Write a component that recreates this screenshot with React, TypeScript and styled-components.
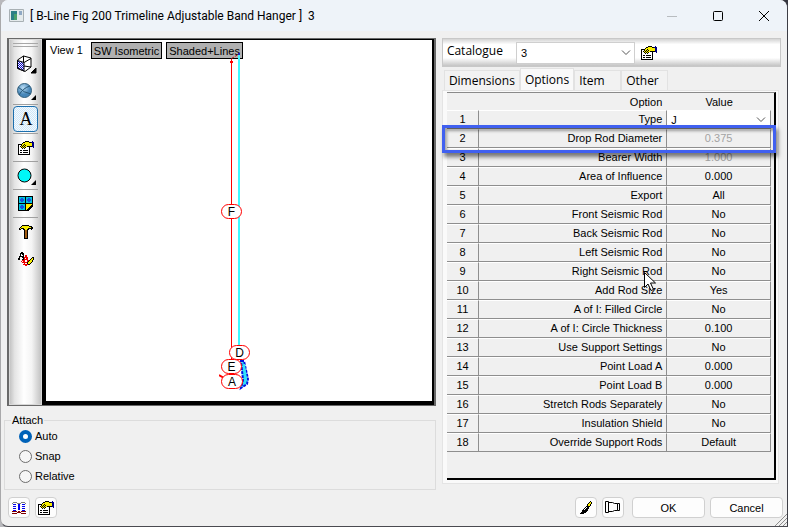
import React, { useState } from "react";
import styled, { createGlobalStyle, css } from "styled-components";

const UI = `"Liberation Sans", Arial, sans-serif`;
const SEGOE = `"Open Sans", "Noto Sans", sans-serif`;

const GlobalStyle = createGlobalStyle`
  *, *::before, *::after { box-sizing: border-box; }
  body {
    margin: 0;
    background: linear-gradient(90deg, #b9b9bd 0, #b9b9bd 60%, #34353f 80%);
    font: 11px/14px ${UI};
    color: #000;
  }
  button, input, select { font: inherit; color: inherit; margin: 0; }
`;

const Dialog = styled.main`
  position: relative;
  display: flex;
  flex-direction: column;
  min-height: 100vh;
  background: #f0f0f0;
  border: 1px solid #a9a9ab;
  border-right-color: #3c3d45;
  border-bottom-color: #4a4a50;
  border-top: 0;
  border-radius: 8px 8px 0 8px;
  overflow: hidden;
`;

const TitleBar = styled.header`
  display: flex;
  align-items: center;
  height: 31px;
  padding: 0 0 0 8px;
  background: #eef3f9;
`;

const Title = styled.h1`
  flex: 1;
  margin: 0 0 0 6px;
  font: 400 12px/16px Roboto, "Noto Sans", sans-serif;
  white-space: pre;
`;

const CaptionButton = styled.button`
  display: grid;
  place-items: center;
  width: 46px;
  height: 31px;
  padding: 0;
  border: 0;
  background: transparent;
`;

const Body = styled.div`
  flex: 1;
  display: grid;
  grid-template-columns: minmax(0, 433fr) minmax(0, 340fr);
  column-gap: 6px;
  padding: 7px 6px 0 3px;
`;

const LeftColumn = styled.div`
  display: flex;
  flex-direction: column;
`;

const RightColumn = styled.div`
  display: flex;
  flex-direction: column;
  padding-bottom: 6px;
`;

const Viewer = styled.section`
  flex: 1;
  display: flex;
  margin-left: 3px;
  border: 2px solid #696969;
  border-width: 1px 2px;
  background: #000;
`;

const Toolbar = styled.div`
  width: 33px;
  padding: 3px 3px 0;
  background: linear-gradient(90deg, #c4c4c4 0, #e4e4e4 15%, #fff 45%, #f4f4f4 70%, #c2c2c2 100%);
  border: 1px solid #d8d8d8;
`;

const Gripper = styled.div`
  height: 4px;
  margin-bottom: 3px;
  border: 1px solid #a8a8a8;
  border-width: 1px 0;
`;

const ToolGroup = styled.div`
  display: flex;
  flex-direction: column;
  & + & { border-top: 1px solid #a0a0a0; }
`;

const ToolButton = styled.button<{ $active?: boolean }>`
  display: grid;
  place-items: center;
  height: 27px;
  padding: 0;
  border: 1px solid transparent;
  border-radius: 4px;
  background: transparent;
  ${(p) =>
    p.$active &&
    css`
      height: 26px;
      margin: 1px 0;
      border-color: #1c6fae;
      background: repeating-conic-gradient(#cfe6f7 0 25%, #f4faff 0 50%) 0 0 / 2px 2px;
    `}
`;

const Stage = styled.div`
  flex: 1;
  display: grid;
  grid-template-rows: 1fr;
  margin: 1px 2px 4px 4px;
  background: #fff;
  overflow: hidden;
`;

const StageHeader = styled.div`
  grid-area: 1 / 1;
  display: flex;
  align-items: flex-start;
  gap: 4px;
  padding: 2px 4px;
`;

const ViewName = styled.span`
  margin-right: 4px;
  line-height: 17px;
`;

const ViewButton = styled.button`
  height: 17px;
  padding: 0 2px;
  border: 1px solid #000;
  background: #b0b0b0;
  white-space: nowrap;
`;

const Model = styled.svg`
  grid-area: 1 / 1;
  justify-self: center;
  pointer-events: none;
  font: 12px ${UI};
`;

const AttachGroup = styled.fieldset`
  display: flex;
  flex-direction: column;
  gap: 6px;
  height: 77px;
  margin: 7px 0 0;
  padding: 2px 14px 0;
  border: 1px solid #dcdcdc;
  legend {
    margin-left: -8px;
    padding: 0 1px;
  }
`;

const RadioLabel = styled.label`
  display: flex;
  align-items: center;
  gap: 3px;
  height: 14px;
`;

const Radio = styled.input`
  appearance: none;
  width: 13px;
  height: 13px;
  border: 1px solid #6e6e6e;
  border-radius: 50%;
  background: #f6f6f6;
  &:checked {
    border: 4px solid #0062b8;
    background: #fff;
  }
`;

const CatalogueBar = styled.div`
  display: flex;
  align-items: center;
  height: 29px;
  padding: 0 4px;
  border: 1px solid #c8c8c8;
  background: linear-gradient(#d4d4d4, #fff 20%, #fff 70%, #c4c4c4);
  label {
    width: 69px;
    padding-bottom: 4px;
    font: 12px/16px ${SEGOE};
  }
`;

const SelectBox = styled.div<{ $flat?: boolean }>`
  position: relative;
  width: ${(p) => (p.$flat ? "100%" : "119px")};
  select {
    display: block;
    appearance: none;
    width: 100%;
    height: ${(p) => (p.$flat ? "17px" : "22px")};
    padding: 0 4px;
    border: ${(p) => (p.$flat ? "0" : "1px solid #cfcfcf")};
    border-radius: 0;
    background: #fff;
  }
  svg {
    position: absolute;
    right: 4px;
    top: 50%;
    margin-top: -3px;
    pointer-events: none;
  }
`;

const IconButton = styled.button`
  display: grid;
  margin-left: 6px;
  padding: 0;
  border: 0;
  background: transparent;
`;

const Tabs = styled.div`
  display: flex;
  align-items: flex-end;
  height: 22px;
  margin-top: 1px;
  padding-left: 2px;
`;

const Tab = styled.button<{ $active?: boolean }>`
  min-width: 47px;
  height: ${(p) => (p.$active ? "22px" : "20px")};
  padding: 0 4px;
  border: 1px solid #e2e2e2;
  border-bottom: 0;
  background: ${(p) => (p.$active ? "#f9f9f9" : "#f2f2f2")};
  font: 12px/16px ${SEGOE};
  text-align: left;
`;

const Page = styled.div`
  flex: 1;
  display: flex;
  flex-direction: column;
  margin-right: 2px;
  padding: 1px 2px 3px 4px;
  border: 1px solid #e4e4e4;
  background: #fafafa;
`;

const GridFrame = styled.div`
  position: relative;
  flex: 1;
  padding: 0 3px 26px 0;
  border-top: 1px solid #8a8a8a;
  border-right: 2px solid #000;
  border-bottom: 2px solid #000;
  background: #f0f0f0;
`;

const Grid = styled.table`
  width: 100%;
  table-layout: fixed;
  border-collapse: separate;
  border-spacing: 0;
  th, td {
    height: 19px;
    padding: 0;
    font-weight: 400;
    line-height: 14px;
    white-space: nowrap;
  }
  thead th { height: 17px; }
`;

const Cell = styled.td<{ $align?: string; $muted?: boolean; $control?: boolean }>`
  border-top: 1px solid #fff;
  border-right: 1px solid #8e8e8e;
  border-bottom: 1px solid #8e8e8e;
  text-align: ${(p) => p.$align || "center"};
  color: ${(p) => (p.$muted ? "#a3a3a3" : "#000")};
  && {
    padding-right: ${(p) => (p.$align === "right" ? "4px" : "0")};
    padding-bottom: ${(p) => (p.$control ? "0" : "2px")};
  }
`;

const OptionHead = styled.th`
  text-align: right;
  && { padding-right: 5px; }
`;

const Highlight = styled.div`
  position: absolute;
  top: 32px;
  left: -5px;
  right: -2px;
  height: 28px;
  border: 3px solid #4060f0;
  box-shadow: 2px 4px 4px rgba(0, 0, 0, 0.5), inset 2px 3px 3px rgba(0, 0, 0, 0.35);
  pointer-events: none;
`;

const Pointer = styled.svg`
  position: absolute;
  top: 179px;
  right: 118px;
  pointer-events: none;
`;

const Footer = styled.footer`
  display: flex;
  gap: 5px;
  padding: 7px 4px 8px 7px;
`;

const FooterGroup = styled.div<{ $push?: boolean }>`
  display: flex;
  gap: 5px;
  margin-left: ${(p) => (p.$push ? "auto" : "0")};
  padding-right: ${(p) => (p.$push ? "3px" : "0")};
`;

const PushButton = styled.button<{ $wide?: boolean }>`
  display: grid;
  place-items: center;
  width: ${(p) => (p.$wide ? "73px" : "22px")};
  height: 21px;
  padding: 0;
  border: 1px solid #d0d0d0;
  border-radius: 4px;
  background: #fdfdfd;
`;

const SizeGrip = styled.svg`
  position: absolute;
  right: 0;
  bottom: 0;
`;

const INK: Record<string, string> = {
  K: "#000",
  W: "#fff",
  Y: "#f8ee00",
  N: "#000080",
  B: "#0000f0",
  G: "#808080",
  R: "#f00000",
  M: "#800000",
  O: "#a05a10",
};

function Pixels({ rows }: { rows: string[] }) {
  const w = Math.max(...rows.map((r) => r.length));
  return (
    <svg width={w} height={rows.length} shapeRendering="crispEdges" aria-hidden="true">
      {rows.flatMap((row, y) =>
        [...row].map((c, x) =>
          INK[c] ? <rect key={`${x}-${y}`} x={x} y={y} width="1" height="1" fill={INK[c]} /> : null
        )
      )}
    </svg>
  );
}

const PROPERTIES = [
  ".......KKKK...N.",
  ".....KKYYYYKKNNN",
  "....KYYYYYYYYYNN",
  "KKKKYYKYYYYYYYNN",
  "KWWKYKYKYYYYYYNN",
  "KWKYKYKYYKKKKKNN",
  "KWWKYKYKWWWK...N",
  "KWWWKWKWWWWK....",
  "KWWWWWWWWWWK....",
  "KWKKWKKKKKWK....",
  "KWWWWWWWWWWK....",
  "KWKKWKKKKKWK....",
  "KWWWWWWWWWWK....",
  "KKKKKKKKKKKK....",
];

const HAMMER = [
  "...KKKKKKK....",
  "..KYYYYYYYKKK.",
  ".KYYYYYYYYYYKK",
  "KYKKKYYYYKKKKK",
  "KK..KKYYKK..K.",
  ".....KOOK.....",
  ".....KOOK.....",
  ".....KOOK.....",
  ".....KOOK.....",
  ".....KOOK.....",
  ".....KOOK.....",
  ".....KOOK.....",
  ".....KOOK.....",
  ".....KKKK.....",
];

const ERASER = [
  "...KK...........",
  "..KKKK..........",
  "..K.KK..........",
  "..K..K.RR.......",
  ".KKKKK.RR.......",
  ".K..KKRRRR....KK",
  "KK...KR.RR...KYK",
  "KK..KKRRRR..KYYK",
  "....RRR..RRKYYK.",
  "...R.RR..RKYYYK.",
  "....RRRRRKYYYK..",
  "......R..KYYK...",
  ".....RRRRRKK....",
  ".......RR.......",
];

const BOOK = [
  "..GGGG....GGGG..",
  ".G....GGGG....G.",
  "..BBB..BB..BBB..",
  ".......BB.......",
  "..BBB..BB..BBB..",
  ".......BB.......",
  "..BBB..BB..BBB..",
  ".......BB.......",
  "..BBB......BBB..",
  ".MMMMM.MM.MMMMM.",
  "......MMMM......",
  ".MMMMM....MMMMM.",
];

const BRUSH = [
  "..........K.",
  ".........KYK",
  "........KYYK",
  ".......KYYK.",
  ".......KYYK.",
  "......KKKK..",
  ".....KWKK...",
  "....KWKKK...",
  "...KWKKK....",
  "..KKKKKK....",
  "..KKKKK.....",
  ".KKKKK......",
  "KKKK........",
];

const Chevron = () => (
  <svg width="10" height="6" fill="none" stroke="#555" aria-hidden="true">
    <path d="M1 .5 5 4.5 9 .5" />
  </svg>
);

const Corner = () => <path d="M21 14v5h-5z" fill="#000" />;

const CubeIcon = () => (
  <svg width="22" height="20" fill="none" stroke="#000">
    <defs>
      <pattern id="hatch" width="2" height="2" patternUnits="userSpaceOnUse">
        <path d="M0 0h2v2H0z" fill="#fff" stroke="none" />
        <path d="M0 0h1v1H0zM1 1h1v1H1z" fill="#0000c8" stroke="none" />
      </pattern>
    </defs>
    <path d="M2.500 6 8.500 2l7.500 2v9l-6 4.500-7.500-3z" fill="#fff" />
    <path d="M2.500 6.500 9 8.500v8.500l-6.500-3z" fill="url(#hatch)" />
    <path d="M9 8.500 16 4.500M8.500 2v6M9 12l7 1" />
    <Corner />
  </svg>
);

const SphereIcon = () => (
  <svg width="22" height="20" fill="none">
    <defs>
      <radialGradient id="ball" cx="40%" cy="30%">
        <stop offset="0" stopColor="#b8dcf4" />
        <stop offset="1" stopColor="#4686b8" />
      </radialGradient>
    </defs>
    <circle cx="9.500" cy="9.500" r="7" fill="url(#ball)" stroke="#34607c" />
    <path d="M3 6q6 6 13 7M15 5q-7 2-11 9" stroke="#285878" />
    <Corner />
  </svg>
);

const CircleIcon = () => (
  <svg width="22" height="20">
    <circle cx="9.500" cy="9.500" r="6.500" fill="#00f8f8" stroke="#000" />
    <Corner />
  </svg>
);

const LetterIcon = () => (
  <svg width="22" height="24" aria-hidden="true">
    <text x="11" y="18" textAnchor="middle" fontFamily="Liberation Serif, serif" fontSize="18">A</text>
  </svg>
);

const TilesIcon = () => (
  <svg width="15" height="15" shapeRendering="crispEdges">
    <path d="M0 0h15v10l-5 5H0z" fill="#000" />
    <path d="M1 1h6v6H1zM8 1h6v6H8zM1 8h6v6H1z" fill="#00c4e0" />
    <path d="M3 2h2v1h1v2H5v1H3V5H2V3h1zM10 2h2v1h1v2h-1v1h-2V5H9V3h1zM3 9h2v1h1v2H5v1H3v-1H2v-2h1z" fill="#1450e0" />
    <path d="M8 8h6l-6 6z" fill="#fff000" />
  </svg>
);

const ReducerIcon = () => (
  <svg width="16" height="13" fill="none" stroke="#000">
    <path d="M.5.500h3v11h-3zM12.500 2.500h2v7h-2zM3.500 1.500h4l2 1h3M3.500 10.500h4l2-1h3" />
  </svg>
);

const AppIcon = () => (
  <svg width="15" height="13">
    <path d="M.5.5h14v12H.5z" fill="#e4eaec" stroke="#a8b0b4" />
    <path d="M2 2h6v9H2z" fill="#2d7f86" />
    <path d="M5 5h3v6H5z" fill="#4ba06c" />
    <path d="M10 2h3v4h-3z" fill="#8fa8c4" />
  </svg>
);

const Balloon = ({ x, y, w, letter }: { x: number; y: number; w: number; letter: string }) => (
  <g>
    <rect x={x - w / 2} y={y - 7} width={w} height="14" rx="7" fill="#fff" stroke="#f00" />
    <text x={x} y={y + 4} textAnchor="middle">{letter}</text>
  </g>
);

const PipeModel = () => (
  <Model width="40" height="360" viewBox="219 40 40 360" role="img" aria-label="Hanger model">
    <path d="M231.500 59v301" stroke="#f00" />
    <path d="M239 54v294" stroke="#40f8ff" strokeWidth="2" />
    <path d="M231.500 58.500 239 54" stroke="#c02020" strokeDasharray="3 1" />
    <path d="M230 61h3v2h-3z" fill="#f00" />
    <path d="M238 53h2v2h-2z" fill="#2020c0" />
    <path d="M241 361h3l4 18-1 5-6 4 2-8z" fill="#30e0f8" stroke="#0010e0" strokeDasharray="3 1" strokeWidth="2" />
    <path d="M244 364 246 380" stroke="#30e0f8" strokeWidth="2" />
    <path d="M219 375l5 3" stroke="#f00" strokeWidth="2" />
    <Balloon x={239.5} y={352.5} w={20} letter="D" />
    <Balloon x={231.5} y={366.5} w={20} letter="E" />
    <Balloon x={232} y={381.5} w={21} letter="A" />
    <Balloon x={231.5} y={211.5} w={20} letter="F" />
  </Model>
);

const OPTIONS: { name: string; value: string; disabled?: boolean }[] = [
  { name: "Type", value: "J" },
  { name: "Drop Rod Diameter", value: "0.375", disabled: true },
  { name: "Bearer Width", value: "1.000", disabled: true },
  { name: "Area of Influence", value: "0.000" },
  { name: "Export", value: "All" },
  { name: "Front Seismic Rod", value: "No" },
  { name: "Back Seismic Rod", value: "No" },
  { name: "Left Seismic Rod", value: "No" },
  { name: "Right Seismic Rod", value: "No" },
  { name: "Add Rod Size", value: "Yes" },
  { name: "A of I: Filled Circle", value: "No" },
  { name: "A of I: Circle Thickness", value: "0.100" },
  { name: "Use Support Settings", value: "No" },
  { name: "Point Load A", value: "0.000" },
  { name: "Point Load B", value: "0.000" },
  { name: "Stretch Rods Separately", value: "No" },
  { name: "Insulation Shield", value: "No" },
  { name: "Override Support Rods", value: "Default" },
];

const NumberCol = styled.col`
  width: 10%;
`;

const OptionCol = styled.col`
  width: 58%;
`;

export default function App() {
  const [attach, setAttach] = useState("Auto");
  const [tab, setTab] = useState("Options");

  return (
    <>
      <GlobalStyle />
      <Dialog>
        <TitleBar>
          <AppIcon />
          <Title>{"[ B-Line Fig 200 Trimeline Adjustable Band Hanger ]  3"}</Title>
          <CaptionButton aria-label="Minimize" disabled>
            <svg width="10" height="10"><path d="M0 5.500h10" stroke="#b8bcc0" /></svg>
          </CaptionButton>
          <CaptionButton aria-label="Maximize">
            <svg width="10" height="10"><rect x=".5" y=".5" width="9" height="9" rx="1" fill="none" stroke="#000" /></svg>
          </CaptionButton>
          <CaptionButton aria-label="Close">
            <svg width="10" height="10"><path d="M0 0l10 10M10 0L0 10" stroke="#000" /></svg>
          </CaptionButton>
        </TitleBar>

        <Body>
          <LeftColumn>
            <Viewer>
              <Toolbar role="toolbar" aria-label="View tools">
                <Gripper />
                <ToolGroup>
                  <ToolButton aria-label="View direction"><CubeIcon /></ToolButton>
                  <ToolButton aria-label="Shading"><SphereIcon /></ToolButton>
                </ToolGroup>
                <ToolGroup>
                  <ToolButton aria-label="Labels" $active><LetterIcon /></ToolButton>
                </ToolGroup>
                <ToolGroup>
                  <ToolButton aria-label="Properties"><Pixels rows={PROPERTIES} /></ToolButton>
                </ToolGroup>
                <ToolGroup>
                  <ToolButton aria-label="Colour"><CircleIcon /></ToolButton>
                </ToolGroup>
                <ToolGroup>
                  <ToolButton aria-label="Views"><TilesIcon /></ToolButton>
                </ToolGroup>
                <ToolGroup>
                  <ToolButton aria-label="Build"><Pixels rows={HAMMER} /></ToolButton>
                  <ToolButton aria-label="Clear labels"><Pixels rows={ERASER} /></ToolButton>
                </ToolGroup>
              </Toolbar>
              <Stage>
                <StageHeader>
                  <ViewName>View 1</ViewName>
                  <ViewButton>SW Isometric</ViewButton>
                  <ViewButton>Shaded+Lines</ViewButton>
                </StageHeader>
                <PipeModel />
              </Stage>
            </Viewer>
            <AttachGroup>
              <legend>Attach</legend>
              {["Auto", "Snap", "Relative"].map((name) => (
                <RadioLabel key={name}>
                  <Radio type="radio" name="attach" checked={attach === name} onChange={() => setAttach(name)} />
                  {name}
                </RadioLabel>
              ))}
            </AttachGroup>
          </LeftColumn>

          <RightColumn>
            <CatalogueBar>
              <label htmlFor="catalogue">Catalogue</label>
              <SelectBox>
                <select id="catalogue"><option>3</option></select>
                <Chevron />
              </SelectBox>
              <IconButton aria-label="Catalogue properties"><Pixels rows={PROPERTIES} /></IconButton>
            </CatalogueBar>
            <Tabs role="tablist">
              {["Dimensions", "Options", "Item", "Other"].map((name) => (
                <Tab key={name} role="tab" aria-selected={tab === name} $active={tab === name} onClick={() => setTab(name)}>
                  {name}
                </Tab>
              ))}
            </Tabs>
            <Page>
              <GridFrame>
                <Grid>
                  <colgroup>
                    <NumberCol />
                    <OptionCol />
                    <col />
                  </colgroup>
                  <thead>
                    <tr>
                      <th />
                      <OptionHead scope="col">Option</OptionHead>
                      <th scope="col">Value</th>
                    </tr>
                  </thead>
                  <tbody>
                    {OPTIONS.map((o, i) => (
                      <tr key={o.name}>
                        <Cell>{i + 1}</Cell>
                        <Cell $align="right" id={`option-${i}`}>{o.name}</Cell>
                        <Cell $muted={o.disabled} $control={i === 0}>
                          {i === 0 ? (
                            <SelectBox $flat>
                              <select aria-labelledby="option-0"><option>{o.value}</option></select>
                              <Chevron />
                            </SelectBox>
                          ) : (
                            o.value
                          )}
                        </Cell>
                      </tr>
                    ))}
                  </tbody>
                </Grid>
                <Highlight />
                <Pointer width="12" height="20" aria-hidden="true">
                  <path d="M.5.500v15l3.500-3.500 3 6.500 2.500-1-3-6.500h5z" fill="#fff" stroke="#000" />
                </Pointer>
              </GridFrame>
            </Page>
          </RightColumn>
        </Body>

        <Footer>
          <FooterGroup>
            <PushButton aria-label="Help"><Pixels rows={BOOK} /></PushButton>
            <PushButton aria-label="Settings"><Pixels rows={PROPERTIES} /></PushButton>
          </FooterGroup>
          <FooterGroup $push>
            <PushButton aria-label="Paint"><Pixels rows={BRUSH} /></PushButton>
            <PushButton aria-label="Reducer"><ReducerIcon /></PushButton>
          </FooterGroup>
          <FooterGroup>
            <PushButton $wide>OK</PushButton>
            <PushButton $wide>Cancel</PushButton>
          </FooterGroup>
        </Footer>
        <SizeGrip width="12" height="12" stroke="#8c8c8c" aria-hidden="true">
          <path d="M0 12 12 0M4 12l8-8M8 12l4-4" />
        </SizeGrip>
      </Dialog>
    </>
  );
}
